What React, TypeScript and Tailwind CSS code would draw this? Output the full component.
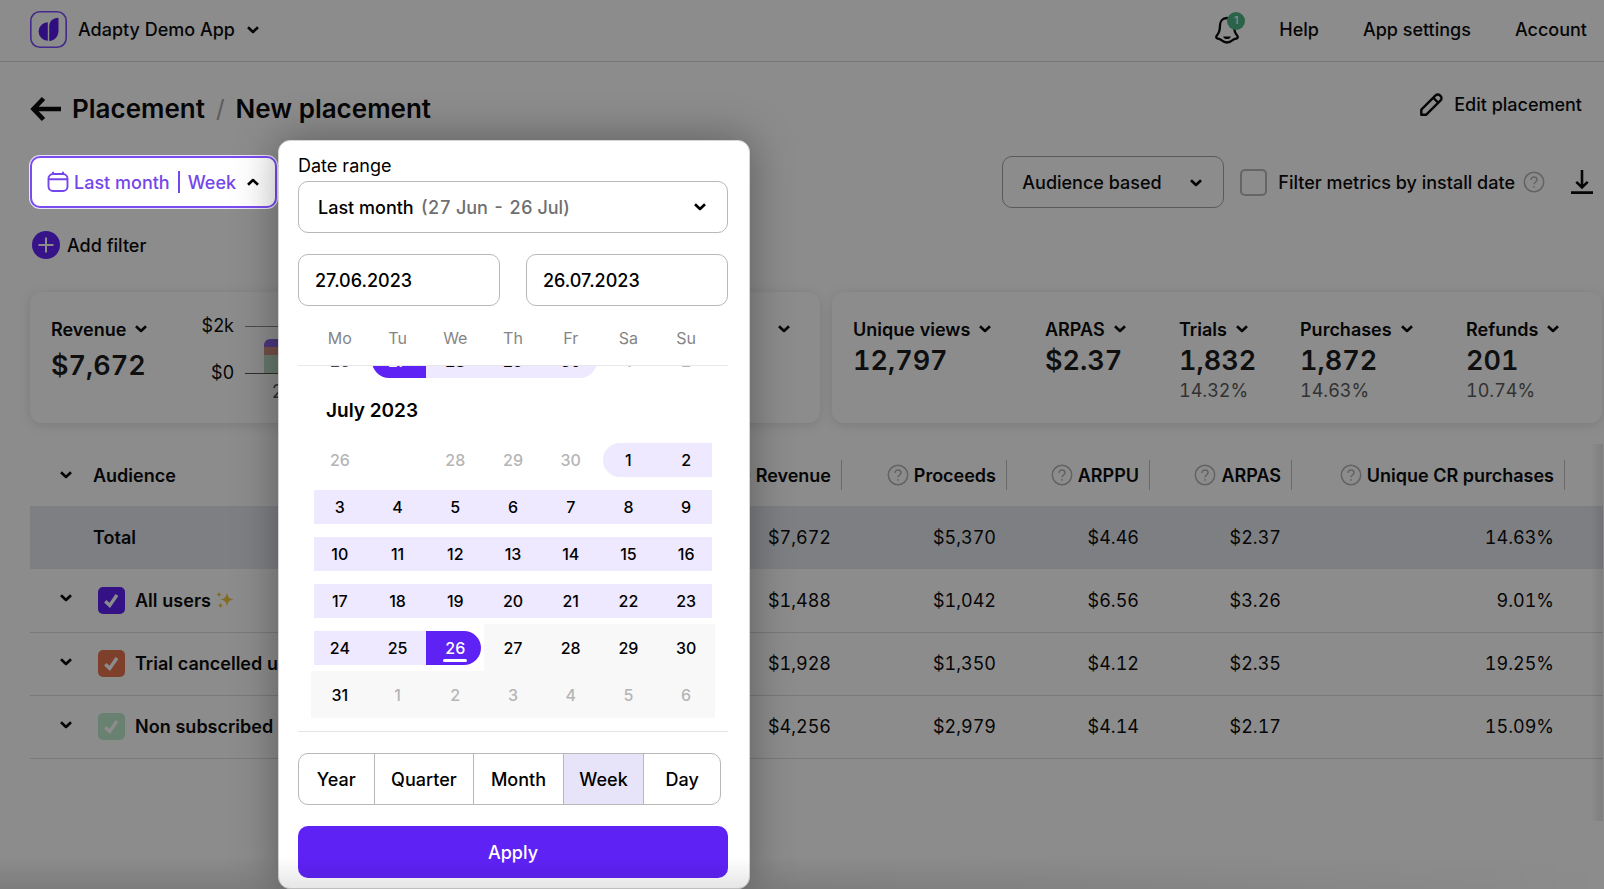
import type { ReactNode } from "react";

function Chevron({ up = false, className = "" }: { up?: boolean; className?: string }) {
  return (
    <svg
      viewBox="0 0 12 8"
      className={`h-2 w-3 shrink-0 ${className}`}
      fill="none"
      stroke="currentColor"
      strokeWidth="2.6"
      aria-hidden="true"
    >
      <path d={up ? "M1 6.8 6 2l5 4.8" : "M1 1.2 6 6l5-4.8"} strokeLinejoin="round" />
    </svg>
  );
}

function HelpIcon() {
  return (
    <svg viewBox="0 0 22 22" className="size-[22px] shrink-0 text-[#b4b4b4]" fill="none" stroke="currentColor" aria-hidden="true">
      <circle cx="11" cy="11" r="9.7" strokeWidth="1.5" />
      <path d="M8 8.9c0-1.800 1.300-2.900 3-2.900s3 1.100 3 2.700c0 2.300-3 2.300-3 4.600" strokeWidth="1.500" />
      <circle cx="11" cy="15.900" r="0.9" fill="currentColor" stroke="none" />
    </svg>
  );
}

function Header() {
  return (
    <header className="flex h-[62px] items-center justify-between border-b border-[#d9d9dc] pb-[2px] pl-[30px] pr-[17px]">
      <button type="button" className="flex items-center">
        <svg viewBox="0 0 37 37" className="size-[37px]" aria-hidden="true">
          <rect x="0.800" y="0.800" width="35.400" height="35.400" rx="9" fill="none" stroke="#7b4dfb" strokeWidth="1.600" />
          <path d="M17.800 11.300v18.400a9.200 9.200 0 0 1 0-18.400Z" fill="#5a1be8" />
          <path d="M19.200 30V15.500c0-5 3.500-8.600 9.300-8.800V19c0 6.500-3.500 10.600-9.300 11Z" fill="#5a1be8" />
        </svg>
        <span className="ml-[11px]">Adapty Demo App</span>
        <Chevron className="ml-3" />
      </button>
      <nav className="flex items-center gap-11">
        <button type="button" aria-label="Notifications" className="relative -mr-1">
          <svg viewBox="0 0 24 28" className="h-7 w-6" fill="none" stroke="currentColor" strokeWidth="2.300" strokeLinejoin="round" aria-hidden="true">
            <path d="M12 2C7.500 2 5 5.300 5 9.500c0 5.500-1 7.800-3.300 10.300-.9 1-.5 2.400.9 2.800 1.200.3 2.500.5 3.600 1.400 1.600 1.300 3 2.500 5.800 2.500s4.200-1.200 5.800-2.500c1.100-.9 2.400-1.100 3.600-1.400 1.400-.4 1.800-1.800.9-2.800C20 17.300 19 15 19 9.500 19 5.300 16.500 2 12 2Z" />
            <path d="M8 20.500h8c-.6 1.700-2 2.600-4 2.600s-3.400-.9-4-2.600Z" fill="currentColor" stroke="none" />
          </svg>
          <span className="absolute -top-1 left-3 flex size-[18px] items-center justify-center rounded-full bg-[#4db483] text-[11px] leading-none text-white">
            1
          </span>
        </button>
        <a href="#help">Help</a>
        <a href="#settings">App settings</a>
        <a href="#account">Account</a>
      </nav>
    </header>
  );
}

type Day = { n: number; kind: "muted" | "past" | "range" | "first" | "last" | "start" | "end" | "future" | "futureMuted" | "blank" };

const inRange = (from: number): Day[] => Array.from({ length: 7 }, (_, i) => ({ n: from + i, kind: "range" }));

const juneWeek: Day[] = [
  { n: 26, kind: "past" },
  { n: 27, kind: "start" },
  { n: 28, kind: "range" },
  { n: 29, kind: "range" },
  { n: 30, kind: "last" },
  { n: 1, kind: "muted" },
  { n: 2, kind: "muted" },
];

const julyWeeks: Day[][] = [
  [
    { n: 26, kind: "muted" },
    { n: 27, kind: "blank" },
    { n: 28, kind: "muted" },
    { n: 29, kind: "muted" },
    { n: 30, kind: "muted" },
    { n: 1, kind: "first" },
    { n: 2, kind: "range" },
  ],
  inRange(3),
  inRange(10),
  inRange(17),
  [
    { n: 24, kind: "range" },
    { n: 25, kind: "range" },
    { n: 26, kind: "end" },
    { n: 27, kind: "future" },
    { n: 28, kind: "future" },
    { n: 29, kind: "future" },
    { n: 30, kind: "future" },
  ],
  [
    { n: 31, kind: "future" },
    { n: 1, kind: "futureMuted" },
    { n: 2, kind: "futureMuted" },
    { n: 3, kind: "futureMuted" },
    { n: 4, kind: "futureMuted" },
    { n: 5, kind: "futureMuted" },
    { n: 6, kind: "futureMuted" },
  ],
];

const dayStyle: Record<Day["kind"], string> = {
  muted: "text-[#b5b5b5]",
  past: "text-[#444]",
  range: "bg-[#eee9fe]",
  first: "ml-[3px] rounded-l-full bg-[#eee9fe] pr-[3px]",
  last: "mr-[3px] rounded-r-full bg-[#eee9fe] pl-[3px]",
  start: "ml-[3px] rounded-l-full bg-[#5f22f5] pr-[3px] text-white",
  end: "mr-[3px] rounded-r-full bg-[#5f22f5] pl-[3px] text-white",
  future: "",
  futureMuted: "text-[#b5b5b5]",
  blank: "",
};

function Week({ days }: { days: Day[] }) {
  return (
    <div className="grid grid-cols-7">
      {days.map((d, i) => {
        const gray = d.kind === "future" || d.kind === "futureMuted";
        const edge = d.kind === "range" ? (i === 0 ? "ml-[3px] pr-[3px]" : i === 6 ? "mr-[3px] pl-[3px]" : "") : "";
        return (
          <div key={i} className={`flex h-[47px] items-center ${gray ? "bg-[#f8f8f8]" : ""}`}>
            {d.kind !== "blank" && (
              <button type="button" className={`flex h-[34px] flex-1 items-center justify-center ${dayStyle[d.kind]} ${edge}`}>
                {d.kind === "end" ? (
                  <span className="relative">
                    {d.n}
                    <span className="absolute inset-x-[-2px] bottom-[-2px] h-[3px] rounded-full bg-white" />
                  </span>
                ) : (
                  d.n
                )}
              </button>
            )}
          </div>
        );
      })}
    </div>
  );
}

const periods = ["Year", "Quarter", "Month", "Week", "Day"];

function DateRangePopover() {
  return (
    <section
      aria-label="Date range"
      className="absolute -top-4 left-[248px] w-[472px] rounded-xl border border-[#d4d4d4] bg-white pt-3 pr-[21px] pb-[10px] pl-[19px] text-black shadow-[0_0_44px_rgba(0,0,0,0.35)]"
    >
      <label htmlFor="preset" className="block h-[28px] leading-[26px] font-normal">
        Date range
      </label>
      <div className="relative flex h-[52px] items-center rounded-[10px] border border-[#b8b8b8] px-[19px]">
        <span>Last month</span>
        <span className="ml-[7px] flex-1 text-[#6f6f6f] tabular-nums">(27 Jun - 26 Jul)</span>
        <Chevron className="mr-[2px]" />
        <select id="preset" className="absolute inset-0 size-full opacity-0">
          <option>Last month</option>
        </select>
      </div>
      <div className="mt-[21px] grid grid-cols-2 gap-[26px]">
        <input aria-label="From" defaultValue="27.06.2023" className="h-[52px] w-full min-w-0 rounded-[10px] border border-[#b8b8b8] px-4" />
        <input aria-label="To" defaultValue="26.07.2023" className="h-[52px] w-full min-w-0 rounded-[10px] border border-[#b8b8b8] px-4" />
      </div>
      <div className="grid h-[60px] grid-cols-7 items-center border-b border-[#e8e8e8] px-[13px] pt-1 text-center text-base font-normal text-[#858585]">
        {["Mo", "Tu", "We", "Th", "Fr", "Sa", "Su"].map((d) => (
          <span key={d}>{d}</span>
        ))}
      </div>
      <div className="overflow-hidden border-b border-[#e4e4e4] px-[13px] pb-[13px] text-base">
        <div className="-mt-[29px]">
          <Week days={juneWeek} />
        </div>
        <h2 className="flex h-[52px] items-center pt-[3px] pl-[15px] text-[19px] font-semibold">July 2023</h2>
        {julyWeeks.map((w, i) => (
          <Week key={i} days={w} />
        ))}
      </div>
      <div className="mt-[21px] mr-[7px] grid h-[52px] grid-cols-[76fr_100fr_90fr_81fr_76fr] overflow-hidden rounded-[10px] border border-[#b8b8b8]">
        {periods.map((p) => (
          <button
            key={p}
            type="button"
            aria-pressed={p === "Week"}
            className={`border-r border-[#b8b8b8] last:border-r-0 ${p === "Week" ? "bg-[#e7e4fa]" : ""}`}
          >
            {p}
          </button>
        ))}
      </div>
      <button type="button" className="mt-[21px] h-[52px] w-full rounded-[10px] bg-[#5f22f5] text-white">
        Apply
      </button>
    </section>
  );
}

function Toolbar() {
  return (
    <div className="flex h-[52px] items-center pr-[11px]">
      <div className="relative z-20">
        <button
          type="button"
          className="flex h-[52px] w-[247px] items-center rounded-[10px] border-2 border-[#7a4cf0] bg-white pl-[15px] text-[#7546ea] shadow-[0_0_0_1px_#e9e4fa]"
        >
          <svg viewBox="0 0 22 22" className="size-[22px]" fill="none" stroke="currentColor" strokeWidth="1.900" aria-hidden="true">
            <rect x="1.500" y="3" width="19" height="17" rx="4.500" />
            <path d="M2 8.200h18M6 .8v3M16 .8v3" />
          </svg>
          <span className="ml-[5px]">Last month</span>
          <span className="mx-2 h-[22px] w-[2px] bg-[#7546ea]" />
          <span>Week</span>
          <Chevron up className="ml-[11px] text-black" />
        </button>
        <DateRangePopover />
      </div>
      <div className="ml-auto flex items-center">
        <div className="relative">
          <select
            aria-label="Grouping"
            className="h-[52px] w-[222px] appearance-none rounded-[10px] border border-[#a4a4a4] bg-transparent px-[19px]"
          >
            <option>Audience based</option>
          </select>
          <Chevron className="pointer-events-none absolute top-[23px] right-[22px]" />
        </div>
        <input
          id="install-date"
          type="checkbox"
          className="ml-4 size-[27px] appearance-none rounded-[5px] border-2 border-[#b8b8b8]"
        />
        <label htmlFor="install-date" className="ml-[11px]">
          Filter metrics by install date
        </label>
        <span className="ml-2">
          <HelpIcon />
        </span>
        <button type="button" aria-label="Download" className="ml-[26px]">
          <svg viewBox="0 0 22 24" className="h-6 w-[22px]" fill="none" stroke="currentColor" strokeWidth="2.600" aria-hidden="true">
            <path d="M11 0v17M5.300 11.800 11 17.500l5.700-5.700M0 22.600h22" />
          </svg>
        </button>
      </div>
    </div>
  );
}

function Metric({ label, value, share }: { label: string; value: string; share?: string }) {
  return (
    <div className="tabular-nums">
      <button type="button" className="flex h-7 items-center font-semibold">
        {label}
        <Chevron className="ml-[9px]" />
      </button>
      <div className="h-9 text-[27px] leading-9 font-semibold text-[#1c1c1c]">{value}</div>
      {share && <div className="h-6 leading-6 font-normal text-[#5c5c5c]">{share}</div>}
    </div>
  );
}

const bars = [0, 1, 2, 3, 4];

function Cards() {
  return (
    <div className="mt-[33px] flex gap-3 pr-[2px]">
      <div className="flex h-[131px] min-w-0 flex-1 rounded-xl bg-white px-[21px] shadow-[0_2px_12px_rgba(0,0,0,0.13)]">
        <div className="pt-[23px]">
          <button type="button" className="flex h-7 items-center font-semibold">
            Revenue
            <Chevron className="ml-[9px]" />
          </button>
          <div className="mt-[6px] text-[27px] leading-[34px] font-semibold text-[#1c1c1c] tabular-nums">$7,672</div>
        </div>
        <div className="ml-auto flex w-[597px] font-normal">
          <div className="flex w-8 flex-col items-end gap-[23px] pt-[22px] leading-6">
            <span>$2k</span>
            <span>$0</span>
          </div>
          <div className="ml-[11px] w-[430px] pt-[34px]">
            <div className="flex h-12 items-end justify-between border-t border-b border-t-[#8a8a8a] border-b-[#555] px-[19px]">
              {bars.map((b) => (
                <div key={b} className="h-[34px] w-10 overflow-hidden rounded-t-md">
                  <div className="h-2 bg-[#8a63e8]" />
                  <div className="h-2 bg-[#d29484]" />
                  <div className="h-[18px] bg-[#bddcc8]" />
                </div>
              ))}
            </div>
            <div className="pt-[6px] pl-[27px] leading-6 text-[#555]">27 Jun</div>
          </div>
          <button type="button" aria-label="Choose metric" className="mt-[23px] mr-[9px] ml-auto flex h-7 items-center self-start">
            <Chevron />
          </button>
        </div>
      </div>
      <div className="grid h-[131px] w-[770px] grid-cols-[192px_134px_121px_166px_auto] rounded-xl bg-white pt-[23px] pl-[21px] shadow-[0_2px_12px_rgba(0,0,0,0.13)]">
        <Metric label="Unique views" value="12,797" />
        <Metric label="ARPAS" value="$2.37" />
        <Metric label="Trials" value="1,832" share="14.32%" />
        <Metric label="Purchases" value="1,872" share="14.63%" />
        <Metric label="Refunds" value="201" share="10.74%" />
      </div>
    </div>
  );
}

function Sparkles() {
  return (
    <svg viewBox="0 0 18 18" className="ml-[5px] size-[18px]" fill="#f0c440" aria-hidden="true">
      <path d="M11 1.500c.9 4.600 2 6 6.500 7-4.500 1-5.600 2.400-6.500 7-.9-4.600-2-6-6.500-7 4.500-1 5.600-2.400 6.500-7Z" />
      <path d="M3 .5c.4 1.900.9 2.500 2.500 3C3.900 4 3.400 4.600 3 6.500 2.600 4.600 2.100 4 .5 3.500 2.100 3 2.600 2.400 3 .5ZM4.500 11.500c.4 1.900 1 2.500 2.500 3-1.500.5-2.100 1.100-2.500 3-.4-1.900-1-2.500-2.500-3 1.500-.5 2.100-1.100 2.500-3Z" />
    </svg>
  );
}

const columns = ["Revenue", "Proceeds", "ARPPU", "ARPAS", "Unique CR purchases"];

const audiences: { name: string; box: string; extra?: ReactNode; values: string[] }[] = [
  { name: "All users", box: "bg-[#5f22f5]", extra: <Sparkles />, values: ["$1,488", "$1,042", "$6.56", "$3.26", "9.01%"] },
  { name: "Trial cancelled users", box: "bg-[#e6754f]", values: ["$1,928", "$1,350", "$4.12", "$2.35", "19.25%"] },
  { name: "Non subscribed users", box: "bg-[#bdebce]", values: ["$4,256", "$2,979", "$4.14", "$2.17", "15.09%"] },
];

const totals = ["$7,672", "$5,370", "$4.46", "$2.37", "14.63%"];

function AudienceTable() {
  return (
    <div className="relative mt-[21px] mr-px h-[377px] overflow-hidden">
      <table className="w-full table-fixed border-collapse">
        <colgroup>
          <col />
          <col className="w-[165px]" />
          <col className="w-[165px]" />
          <col className="w-[143px]" />
          <col className="w-[142px]" />
          <col className="w-[273px]" />
          <col className="w-[38px]" />
        </colgroup>
        <thead>
          <tr className="h-[62px]">
            <th className="text-left font-semibold">
              <button type="button" className="flex items-center pl-[30px]">
                <Chevron />
                <span className="ml-[21px]">Audience</span>
              </button>
            </th>
            {columns.map((c) => (
              <th key={c} className="font-semibold">
                <div className="flex h-[30px] items-center justify-end gap-[5px] border-r border-[#c2c2c2] pr-[10px]">
                  <HelpIcon />
                  {c}
                </div>
              </th>
            ))}
            <th />
          </tr>
        </thead>
        <tbody className="tabular-nums">
          <tr className="h-[63px] bg-[#e4e7ee]">
            <th className="pl-[63px] text-left font-semibold">Total</th>
            {totals.map((v, i) => (
              <td key={i} className="pr-[11px] text-right font-normal">
                {v}
              </td>
            ))}
            <td />
          </tr>
          {audiences.map((a) => (
            <tr key={a.name} className="h-[63px] border-b border-[#dcdce0]">
              <th className="pl-[30px] text-left font-semibold">
                <div className="flex items-center">
                  <button type="button" aria-label={`Expand ${a.name}`} className="mb-1">
                    <Chevron />
                  </button>
                  <label className="ml-[26px] flex items-center">
                    <span className="relative mr-[10px] flex">
                      <input type="checkbox" defaultChecked className={`size-[27px] appearance-none rounded-[5px] ${a.box}`} />
                      <svg viewBox="0 0 27 27" className="pointer-events-none absolute inset-0 size-[27px]" fill="none" stroke="#fff" strokeWidth="3.400" aria-hidden="true">
                        <path d="m7.300 14.300 4.400 4.200L19 8" />
                      </svg>
                    </span>
                    {a.name}
                    {a.extra}
                  </label>
                </div>
              </th>
              {a.values.map((v, i) => (
                <td key={i} className="pr-[11px] text-right font-normal">
                  {v}
                </td>
              ))}
              <td />
            </tr>
          ))}
        </tbody>
      </table>
      <div className="pointer-events-none absolute inset-y-0 right-0 w-3 bg-gradient-to-r from-transparent to-black/10" />
    </div>
  );
}

export default function App() {
  return (
    <div className="relative min-h-screen overflow-hidden bg-white font-['Inter',sans-serif] text-[18px] font-medium text-[#0c0c0c]">
      <Header />
      <main className="pl-[30px]">
        <div className="flex h-[94px] items-center justify-between pr-[22px]">
          <h1 className="flex items-center text-[26px] leading-9 font-semibold">
            <a href="#back" aria-label="Back">
              <svg viewBox="0 0 31 26" className="h-[26px] w-[31px]" fill="none" stroke="currentColor" strokeWidth="4.600" aria-hidden="true">
                <path d="M31 13H4M13.500 2.500 3.500 13l10 10.500" />
              </svg>
            </a>
            <a href="#placement" className="ml-[11px]">
              Placement
            </a>
            <span className="mx-[11px] text-[24px] font-normal text-[#a8a8a8]">/</span>
            New placement
          </h1>
          <button type="button" className="mb-[9px] flex items-center">
            <svg viewBox="0 0 23 23" className="size-[23px]" fill="none" stroke="currentColor" strokeWidth="2.400" strokeLinejoin="round" aria-hidden="true">
              <path d="M1.300 21.700v-5L15.600 2.400a3 3 0 0 1 4.300 0l.7.7a3 3 0 0 1 0 4.300L6.300 21.700ZM13.500 5l4.500 4.500" />
            </svg>
            <span className="ml-[11px]">Edit placement</span>
          </button>
        </div>
        <Toolbar />
        <button type="button" className="mt-[23px] ml-[2px] flex h-7 items-center">
          <svg viewBox="0 0 28 28" className="size-7" aria-hidden="true">
            <circle cx="14" cy="14" r="14" fill="#6423fa" />
            <path d="M14 6.500v15M6.500 14h15" stroke="#fff" strokeWidth="2" />
          </svg>
          <span className="ml-[7px]">Add filter</span>
        </button>
        <Cards />
        <AudienceTable />
      </main>
      <div className="absolute inset-0 z-10 bg-black/45" />
      <div className="pointer-events-none absolute inset-x-0 bottom-0 z-30 h-8 bg-gradient-to-r from-black/10 via-black/10 to-transparent [mask-image:linear-gradient(to_top,black,transparent)]" />
    </div>
  );
}
